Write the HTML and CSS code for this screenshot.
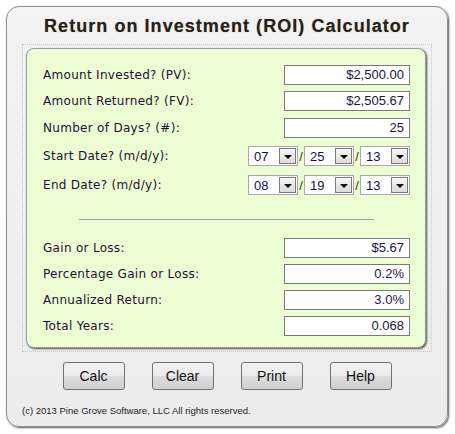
FILE: index.html
```html
<!DOCTYPE html>
<html>
<head>
<meta charset="utf-8">
<title>Return on Investment (ROI) Calculator</title>
<link rel="stylesheet" href="styles.css">
</head>
<body>
<div class="calc">
  <h1 class="title">Return on Investment (ROI) Calculator</h1>
  <div class="frame">
    <div class="panel">
      <div class="rows">
        <div class="row"><span class="label">Amount Invested? (PV):</span><span class="field">$2,500.00</span></div>
        <div class="row"><span class="label">Amount Returned? (FV):</span><span class="field">$2,505.67</span></div>
        <div class="row"><span class="label">Number of Days? (#):</span><span class="field">25</span></div>
        <div class="row date-row first">
          <span class="label">Start Date? (m/d/y):</span>
          <span class="date">
            <span class="sel"><span class="val">07</span><span class="arrow"></span></span><span class="slash">/</span><span class="sel"><span class="val">25</span><span class="arrow"></span></span><span class="slash">/</span><span class="sel"><span class="val">13</span><span class="arrow"></span></span>
          </span>
        </div>
        <div class="row date-row second">
          <span class="label">End Date? (m/d/y):</span>
          <span class="date">
            <span class="sel"><span class="val">08</span><span class="arrow"></span></span><span class="slash">/</span><span class="sel"><span class="val">19</span><span class="arrow"></span></span><span class="slash">/</span><span class="sel"><span class="val">13</span><span class="arrow"></span></span>
          </span>
        </div>
      </div>
      <div class="divider"></div>
      <div class="rows results">
        <div class="row"><span class="label">Gain or Loss:</span><span class="field">$5.67</span></div>
        <div class="row"><span class="label">Percentage Gain or Loss:</span><span class="field">0.2%</span></div>
        <div class="row"><span class="label">Annualized Return:</span><span class="field">3.0%</span></div>
        <div class="row"><span class="label">Total Years:</span><span class="field">0.068</span></div>
      </div>
    </div>
  </div>
  <div class="buttons">
    <button class="btn">Calc</button>
    <button class="btn">Clear</button>
    <button class="btn">Print</button>
    <button class="btn">Help</button>
  </div>
  <p class="footer">(c) 2013 Pine Grove Software, LLC All rights reserved.</p>
</div>
</body>
</html>
```

FILE: styles.css
```css
html, body {
  margin: 0;
  padding: 0;
  background: #ffffff;
}

.calc {
  box-sizing: border-box;
  margin: 6px;
  width: 442px;
  height: 421px;
  border: 1px solid #8f8f8f;
  border-radius: 13px;
  background: linear-gradient(#f3f3f3, #ececec);
  box-shadow: 1px 1px 2px #5a5a5a;
  font-family: "Liberation Sans", Arial, sans-serif;
}

.title {
  margin: 0;
  padding-top: 2px;
  height: 35px;
  line-height: 35px;
  text-align: center;
  font-size: 18px;
  font-weight: bold;
  letter-spacing: 1.05px;
  color: #222222;
  text-shadow: 0 0 1px rgba(140, 80, 20, 0.6);
}

.frame {
  margin: 0 15px;
  padding: 3px 6px 3px 3px;
  border: 1px dotted #c8c8c8;
}

.panel {
  box-sizing: border-box;
  width: 400px;
  padding: 16px 15px 11px 16px;
  background: #edfdd3;
  border: 1px solid #9a9a9a;
  border-radius: 8px;
  box-shadow: 1px 1px 2px #555555;
}

.rows {
  display: flex;
  flex-direction: column;
  gap: 7px;
}

.rows .row:nth-child(2) {
  margin-top: -1px;
}

.rows .date-row.first {
  margin-top: 1px;
}

.rows .date-row.second {
  margin-top: 2px;
}

.results {
  gap: 6px;
}

.results .row:nth-child(2) {
  margin-top: 0;
}

.row {
  display: flex;
  justify-content: space-between;
  align-items: center;
  height: 20px;
}

.label {
  font-family: "DejaVu Sans", Verdana, sans-serif;
  font-size: 12px;
  letter-spacing: 0.3px;
  color: #1b1236;
}

.field {
  box-sizing: border-box;
  width: 126px;
  height: 20px;
  line-height: 18px;
  padding-right: 5px;
  border: 1px solid #7a7a7a;
  background: #ffffff;
  text-align: right;
  font-size: 13px;
  color: #1a1640;
}

.date {
  display: flex;
  align-items: center;
}

.sel {
  box-sizing: border-box;
  display: flex;
  justify-content: space-between;
  align-items: center;
  width: 50px;
  height: 20px;
  padding: 1px;
  border: 1px solid #a8a8a8;
  background: #ffffff;
}

.val {
  padding-left: 4px;
  font-size: 13px;
  color: #15104a;
}

.arrow {
  box-sizing: border-box;
  position: relative;
  width: 17px;
  height: 16px;
  border: 1px solid #7a7a7a;
  background: linear-gradient(#f6f6f6, #dcdcdc);
}

.arrow::after {
  content: "";
  position: absolute;
  left: 4px;
  top: 6px;
  border-left: 4px solid transparent;
  border-right: 4px solid transparent;
  border-top: 4px solid #000000;
}

.slash {
  width: 6px;
  text-align: center;
  font-size: 13px;
  color: #3a2a10;
}

.divider {
  width: 295px;
  height: 1px;
  margin: 24px auto 18px;
  background: #a0a0a0;
}

.buttons {
  display: flex;
  justify-content: center;
  gap: 27px;
  margin-top: 10px;
}

.btn {
  box-sizing: border-box;
  width: 62px;
  height: 28px;
  padding: 0;
  border: 1px solid #707070;
  border-radius: 3px;
  background: linear-gradient(#f2f2f2 0%, #ebebeb 50%, #dddddd 50%, #cfcfcf 100%);
  font-family: "Liberation Sans", Arial, sans-serif;
  font-size: 14px;
  color: #111111;
}

.footer {
  margin: 15px 0 0 15px;
  font-size: 9.5px;
  line-height: 12px;
  color: #222222;
}
```
